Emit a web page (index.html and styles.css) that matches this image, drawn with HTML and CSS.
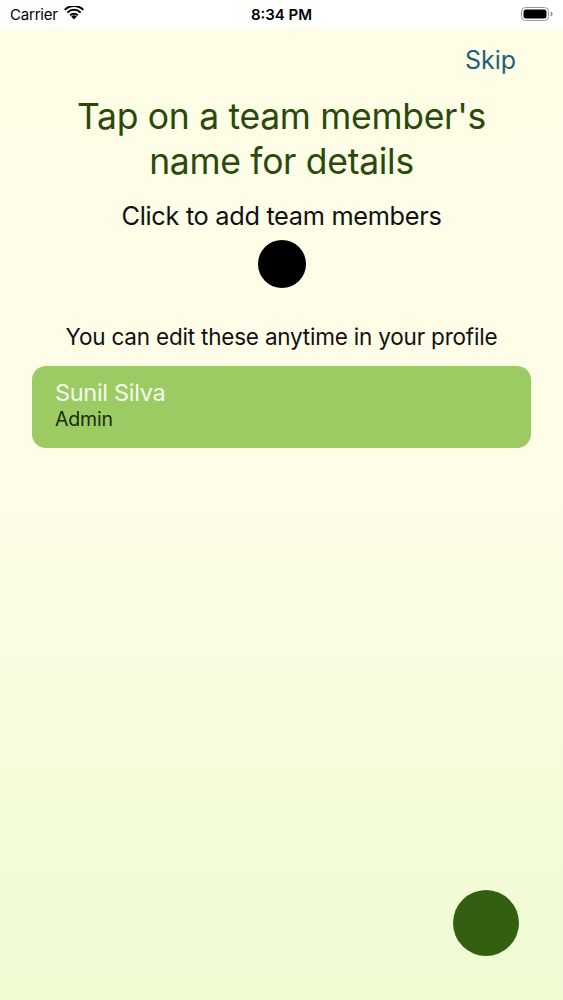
FILE: index.html
```html
<!DOCTYPE html>
<html lang="en">
<head>
    <meta charset="UTF-8">
    <title>Team Members</title>
    <meta name="viewport" content="width=device-width, initial-scale=1">
    <link rel="stylesheet" href="styles.css">
</head>
<body>
    <div class="screen">
        <div class="status-bar">
            <div class="status-left">
                <span>Carrier</span>
                <svg class="wifi" width="20" height="14" viewBox="0 0 20 14">
                    <path d="M10 13.5 L7.2 10.6 A4 4 0 0 1 12.8 10.6 Z" fill="#000"/>
                    <path d="M5.4 8.7 A6.6 6.6 0 0 1 14.6 8.7 L13.2 10.1 A4.6 4.6 0 0 0 6.8 10.1 Z" fill="#000"/>
                    <path d="M2.6 5.9 A10.5 10.5 0 0 1 17.4 5.9 L16 7.3 A8.5 8.5 0 0 0 4 7.3 Z" fill="#000"/>
                    <path d="M0 3.2 A14 14 0 0 1 20 3.2 L18.6 4.6 A12 12 0 0 0 1.4 4.6 Z" fill="#000"/>
                </svg>
            </div>
            <div class="status-time">8:34 PM</div>
            <div class="status-right">
                <svg width="32" height="14" viewBox="0 0 32 14">
                    <rect x="0.5" y="0.5" width="27" height="13" rx="4" fill="none" stroke="#999" stroke-width="1"/>
                    <rect x="2.5" y="2.5" width="23" height="9" rx="2.5" fill="#000"/>
                    <path d="M29.5 4.8 A2 2 0 0 1 29.5 9.2 Z" fill="#999"/>
                </svg>
            </div>
        </div>

        <div class="content">
            <div class="skip-row"><a class="skip" href="#">Skip</a></div>
            <h1 class="title">Tap on a team member's<br>name for details</h1>
            <p class="add-label">Click to add team members</p>
            <div class="add-dot"></div>
            <p class="hint">You can edit these anytime in your profile</p>

            <div class="member-card">
                <div class="member-name">Sunil Silva</div>
                <div class="member-role">Admin</div>
            </div>
        </div>

        <button class="fab" aria-label="Next"></button>
    </div>
</body>
</html>
```

FILE: styles.css
```css
* { box-sizing: border-box; }
body { margin: 0; font-family: Inter, "Noto Sans", Arial, sans-serif; }
.screen {
    position: relative; width: 563px; height: 1000px; overflow: hidden;
    background: linear-gradient(to bottom, #fffef0 0px, #fefde6 40px, #fefde8 500px, #f3fcd9 800px, #effcd2 1000px);
    display: flex; flex-direction: column;
}
.status-bar {
    height: 30px; display: flex; align-items: center; justify-content: space-between;
    padding: 0 10px 2px 10px; font-size: 15px; color: #000;
    background: linear-gradient(to bottom, #ffffff 0px, #ffffff 22px, #fffef2 30px);
}
.status-left { display: flex; align-items: center; gap: 6px; width: 120px; letter-spacing: -0.2px; }
.status-time { font-weight: 600; font-size: 15px; }
.status-right { width: 120px; display: flex; justify-content: flex-end; }
.wifi { margin-top: -2px; }

.content { display: flex; flex-direction: column; align-items: center; padding: 0 32px; }
.skip-row { align-self: stretch; display: flex; justify-content: flex-end; padding: 14px 15px 0 0; }
.skip { color: #1e6176; font-size: 25px; text-decoration: none; line-height: 32px; }
.title {
    margin: 18px 0 0 0; font-weight: 400; font-size: 35.5px; line-height: 45px;
    color: #2a4a0c; text-align: center; letter-spacing: -0.3px;
}
.add-label { margin: 17px 0 0 0; font-size: 25.3px; line-height: 30px; color: #111; letter-spacing: -0.3px; }
.add-dot { width: 48px; height: 48px; border-radius: 50%; background: #000; margin-top: 9px; }
.hint { margin: 35px 0 0 0; font-size: 22.5px; line-height: 28px; color: #111; letter-spacing: -0.2px; }

.member-card {
    align-self: stretch; margin-top: 15px; height: 82px; border-radius: 14px;
    background: #9ccb64; padding: 13px 23px;
}
.member-name { color: #f6faee; font-size: 23.5px; line-height: 28px; letter-spacing: -0.3px; }
.member-role { color: #1b2b0c; font-size: 19.5px; line-height: 24px; letter-spacing: -0.2px; }

.fab {
    position: absolute; left: 453px; top: 890px; width: 66px; height: 66px;
    border-radius: 50%; border: none; background: #345f10; padding: 0;
}
```
